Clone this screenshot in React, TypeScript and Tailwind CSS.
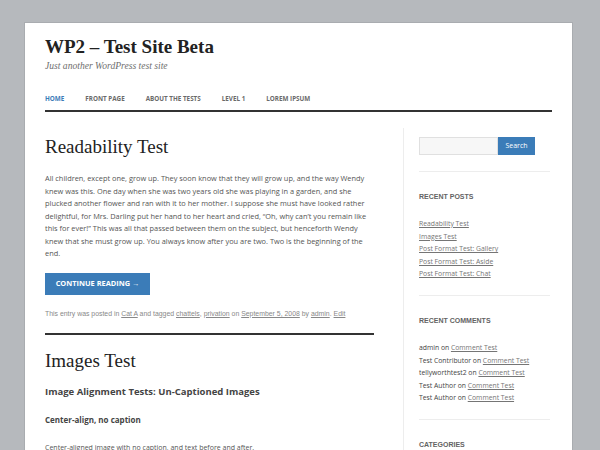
import React from 'react';

const serif = { fontFamily: '"Liberation Serif", "Times New Roman", serif' };

const recentPosts = [
  'Readability Test',
  'Images Test',
  'Post Format Test: Gallery',
  'Post Format Test: Aside',
  'Post Format Test: Chat',
];

const recentComments = [
  'admin',
  'Test Contributor',
  'tellyworthtest2',
  'Test Author',
  'Test Author',
];

const navItems = ['Home', 'Front Page', 'About The Tests', 'Level 1', 'Lorem Ipsum'];

function WidgetTitle({ children }: { children: React.ReactNode }) {
  return (
    <h3 className="font-['Liberation_Sans',Arial,sans-serif] text-[7px] font-bold uppercase leading-[12px] text-[#636363]">
      {children}
    </h3>
  );
}

export default function App() {
  return (
    <div className="h-[450px] w-[600px] overflow-hidden bg-[#b6b9bd] pl-[24px] pt-[22px] font-['Open_Sans',sans-serif]">
      <div className="h-[460px] w-[549px] border border-[#a9acb0] bg-white px-[20px] pt-[12px]">
        <header>
          <h1 className="text-[19px] font-bold leading-[24px] text-[#222]" style={serif}>
            WP2 – Test Site Beta
          </h1>
          <p className="text-[9.6px] italic leading-[14px] text-[#6f6f6f]" style={serif}>
            Just another WordPress test site
          </p>
          <nav className="mt-[21px] flex gap-[21px] border-b-[2px] border-[#333] pb-[6px]">
            {navItems.map((item, i) => (
              <span
                key={item}
                className={`text-[6.3px] font-bold uppercase leading-[10px] ${i === 0 ? 'text-[#3b7cb8]' : 'text-[#6a6a6a]'}`}
              >
                {item}
              </span>
            ))}
          </nav>
        </header>

        <div className="mt-[16px] flex">
          <main className="w-[329px]">
            <article>
              <h2 className="mt-[7px] text-[19px] leading-[24px] text-[#222]" style={serif}>
                Readability Test
              </h2>
              <p className="mt-[13px] text-[7.4px] leading-[12.5px] text-[#555]">
                All children, except one, grow up. They soon know that they will grow up, and the way Wendy
                knew was this. One day when she was two years old she was playing in a garden, and she
                plucked another flower and ran with it to her mother. I suppose she must have looked rather
                delightful, for Mrs. Darling put her hand to her heart and cried, “Oh, why can’t you remain like
                this for ever!” This was all that passed between them on the subject, but henceforth Wendy
                knew that she must grow up. You always know after you are two. Two is the beginning of the
                end.
              </p>
              <button
                type="button"
                className="mt-[13px] h-[22px] w-[105px] bg-[#3b7cb8] text-[7.4px] font-bold uppercase text-white"
              >
                Continue reading →
              </button>
              <footer className="mt-[14px] font-['Liberation_Sans',Arial,sans-serif] text-[6.9px] leading-[10px] text-[#888]">
                This entry was posted in <span className="underline">Cat A</span> and tagged{' '}
                <span className="underline">chattels</span>, <span className="underline">privation</span> on{' '}
                <span className="underline">September 5, 2008</span> by <span className="underline">admin</span>.{' '}
                <span className="underline">Edit</span>
              </footer>
            </article>
            <div className="mt-[14px] h-[2px] bg-[#333]" />
            <article>
              <h2 className="mt-[14px] text-[19px] leading-[24px] text-[#222]" style={serif}>
                Images Test
              </h2>
              <h3 className="mt-[12px] text-[9.5px] font-bold leading-[14px] text-[#444]">
                Image Alignment Tests: Un-Captioned Images
              </h3>
              <h4 className="mt-[14px] text-[8px] font-bold leading-[14px] text-[#444]">Center-align, no caption</h4>
              <p className="mt-[15px] text-[7px] leading-[12px] text-[#555]">
                Center-aligned image with no caption, and text before and after.
              </p>
            </article>
          </main>

          <aside className="ml-[29px] flex-1 border-l border-[#ededed] pl-[15px]">
            <div className="flex pt-[9px]">
              <div className="h-[18px] w-[79px] border border-[#e0e0e0] bg-[#f7f7f7]" />
              <button type="button" className="h-[18px] w-[37px] bg-[#3b7cb8] text-[7px] text-white">
                Search
              </button>
            </div>
            <div className="mt-[16px] h-px w-[131px] bg-[#ededed]" />
            <div className="pt-[19px]">
              <WidgetTitle>Recent Posts</WidgetTitle>
              <ul className="mt-[15px] text-[6.8px] leading-[12.6px] text-[#757575]">
                {recentPosts.map((p) => (
                  <li key={p} className="underline">
                    {p}
                  </li>
                ))}
              </ul>
            </div>
            <div className="mt-[14px] h-px w-[131px] bg-[#ededed]" />
            <div className="pt-[19px]">
              <WidgetTitle>Recent Comments</WidgetTitle>
              <ul className="mt-[15px] text-[6.8px] leading-[12.6px] text-[#444]">
                {recentComments.map((c, i) => (
                  <li key={i}>
                    {c} on <span className="text-[#757575] underline">Comment Test</span>
                  </li>
                ))}
              </ul>
            </div>
            <div className="mt-[14px] h-px w-[131px] bg-[#ededed]" />
            <div className="pt-[19px]">
              <WidgetTitle>Categories</WidgetTitle>
            </div>
          </aside>
        </div>
      </div>
    </div>
  );
}
